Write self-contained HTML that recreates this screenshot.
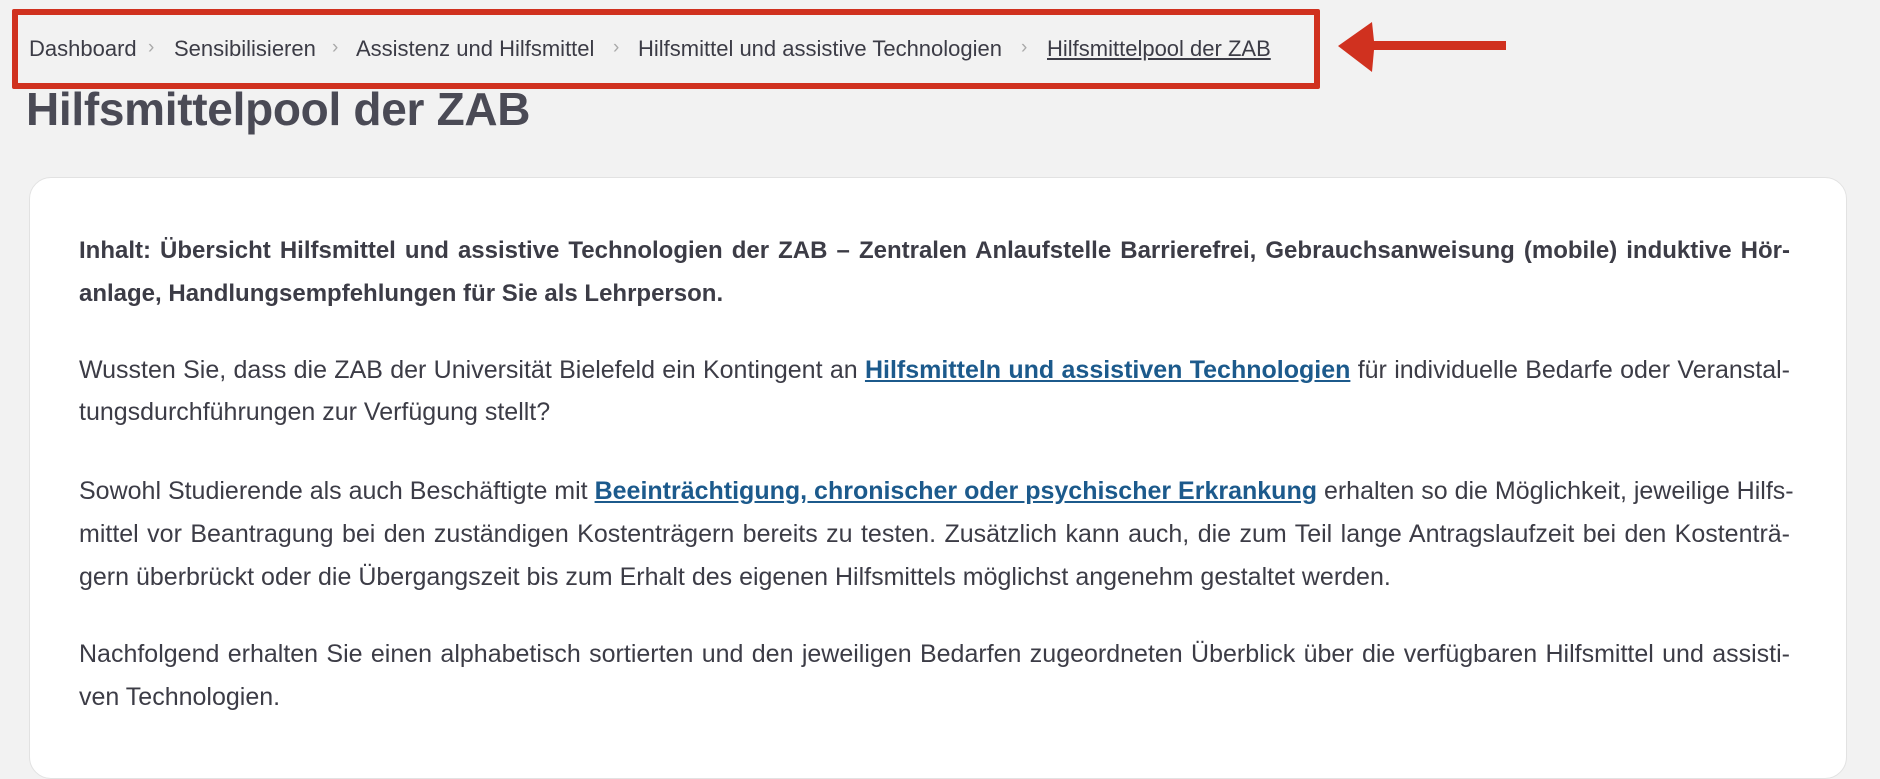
<!DOCTYPE html>
<html><head><meta charset="utf-8"><style>
html,body{margin:0;padding:0}
body{width:1880px;height:740px;background:#f2f2f2;font-family:"Liberation Sans",sans-serif;color:#3c3c46;position:relative;overflow:hidden}
.bc{position:absolute;top:36px;left:0;font-size:22px;color:#3c3c46;white-space:nowrap}
.bc span{position:absolute;top:0}
.sep{color:#aaa;font-size:19px;top:1px!important}
.box{position:absolute;left:12px;top:9px;width:1296px;height:68px;border:6px solid #d0311f;border-radius:2px}
h1{position:absolute;left:26px;top:82px;margin:0;font-size:46px;font-weight:bold;color:#4a4a55;letter-spacing:-0.3px;white-space:nowrap}
.card{position:absolute;left:29px;top:177px;width:1816px;height:600px;background:#fff;border:1px solid #e2e2e2;border-radius:22px}
.l{position:absolute;left:79px;width:1711px;font-size:25px;line-height:28px;white-space:nowrap;text-align:justify;text-align-last:justify}
.l.bb{font-size:24px}
.last{text-align-last:left}
b{font-weight:bold}
a{color:#1c5a8c;font-weight:bold;text-decoration:underline}
</style></head><body>
<div class="box"></div>
<svg style="position:absolute;left:1334px;top:16px" width="176" height="60" viewBox="0 0 176 60">
<polygon points="4,30 38,6 40,25 172,25 172,34 40,34 38,56" fill="#d0311f"/>
</svg>
<div class="bc">
<span style="left:29px">Dashboard</span>
<span class="sep" style="left:148px">›</span>
<span style="left:174px">Sensibilisieren</span>
<span class="sep" style="left:332px">›</span>
<span style="left:356px">Assistenz und Hilfsmittel</span>
<span class="sep" style="left:613px">›</span>
<span style="left:638px">Hilfsmittel und assistive Technologien</span>
<span class="sep" style="left:1021px">›</span>
<span style="left:1047px;text-decoration:underline">Hilfsmittelpool der ZAB</span>
</div>
<h1>Hilfsmittelpool der ZAB</h1>
<div class="card"></div>
<div class="l bb" style="top:237px"><b>Inhalt: Übersicht Hilfsmittel und assistive Technologien der ZAB – Zentralen Anlaufstelle Barrierefrei, Gebrauchsanweisung (mobile) induktive Hör-</b></div>
<div class="l bb last" style="top:280px"><b>anlage, Handlungsempfehlungen für Sie als Lehrperson.</b></div>
<div class="l" style="top:356px">Wussten Sie, dass die ZAB der Universität Bielefeld ein Kontingent an <a>Hilfsmitteln und assistiven Technologien</a> für individuelle Bedarfe oder Veranstal-</div>
<div class="l last" style="top:398px">tungsdurchführungen zur Verfügung stellt?</div>
<div class="l" style="top:477px">Sowohl Studierende als auch Beschäftigte mit <a>Beeinträchtigung, chronischer oder psychischer Erkrankung</a> erhalten so die Möglichkeit, jeweilige Hilfs-</div>
<div class="l" style="top:520px">mittel vor Beantragung bei den zuständigen Kostenträgern bereits zu testen. Zusätzlich kann auch, die zum Teil lange Antragslaufzeit bei den Kostenträ-</div>
<div class="l last" style="top:563px">gern überbrückt oder die Übergangszeit bis zum Erhalt des eigenen Hilfsmittels möglichst angenehm gestaltet werden.</div>
<div class="l" style="top:640px">Nachfolgend erhalten Sie einen alphabetisch sortierten und den jeweiligen Bedarfen zugeordneten Überblick über die verfügbaren Hilfsmittel und assisti-</div>
<div class="l last" style="top:683px">ven Technologien.</div>
</body></html>
